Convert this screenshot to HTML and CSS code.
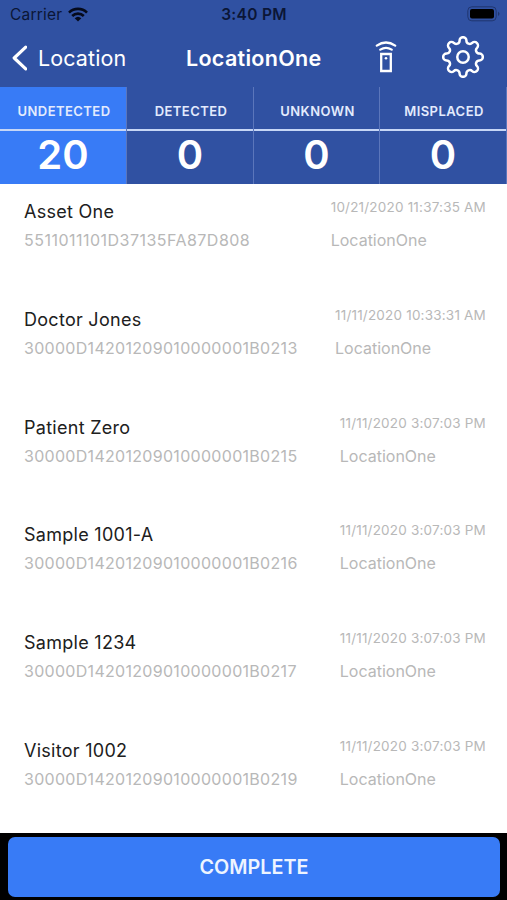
FILE: index.html
```html
<!DOCTYPE html>
<html lang="en">
<head>
<meta charset="utf-8">
<title>LocationOne</title>
<link rel="stylesheet" href="styles.css">
</head>
<body>
<header class="header">
  <div class="status">
    <div class="carrier"><span>Carrier</span>
      <svg class="wifi" width="20" height="15" viewBox="0 0 20 15" fill="none" stroke="#050a1c" stroke-width="2.6"><path d="M1 5.6a12.8 12.8 0 0 1 18 0M4.2 9a8.3 8.3 0 0 1 11.6 0"/><path d="M6.7 11.2a4.8 4.8 0 0 1 6.6 0L10 14.6z" fill="#050a1c" stroke="none"/></svg>
    </div>
    <span class="time">3:40 PM</span>
    <svg class="battery" width="33" height="16" viewBox="0 0 33 16"><rect x=".8" y=".8" width="28.4" height="14" rx="4" fill="none" stroke="#20366f"/><rect x="3" y="3" width="24" height="9.6" rx="2" fill="#000"/><path d="M31 5.5q3 2.3 0 4.6z" fill="#20366f"/></svg>
  </div>
  <nav class="nav">
    <a class="back"><svg width="16" height="26" viewBox="0 0 16 26" fill="none" stroke="#fff" stroke-width="3.2" stroke-linecap="round" stroke-linejoin="round"><path d="M14.7 2.2 3.2 13l11.5 10.8"/></svg><span>Location</span></a>
    <h1 class="title">LocationOne</h1>
    <svg class="reader" width="22" height="32" viewBox="0 0 22 32" fill="none" stroke="#fff" stroke-width="2.3" stroke-linecap="round"><path d="M1.8 4.6Q11-1.6 20.2 4.6M5.3 8.6Q11 5 16.7 8.6"/><path d="M6.2 13h9.6v17H6.2z" stroke-linecap="butt"/><circle cx="11" cy="17.2" r="1.3" fill="#fff" stroke="none"/></svg>
    <svg class="gear" width="42" height="42" viewBox="-22 -22 44 44" fill="none" stroke="#fff" stroke-width="2.6" stroke-linejoin="round"><path d="M-3.6-17.2A3.6 3.6 0 0 1 3.6-17.2A3.5 3.5 0 0 0 9.62-14.71A3.6 3.6 0 0 1 14.71-9.62A3.5 3.5 0 0 0 17.2-3.6A3.6 3.6 0 0 1 17.2 3.6A3.5 3.5 0 0 0 14.71 9.62A3.6 3.6 0 0 1 9.62 14.71A3.5 3.5 0 0 0 3.6 17.2A3.6 3.6 0 0 1-3.6 17.2A3.5 3.5 0 0 0-9.62 14.71A3.6 3.6 0 0 1-14.71 9.62A3.5 3.5 0 0 0-17.2 3.6A3.6 3.6 0 0 1-17.2-3.6A3.5 3.5 0 0 0-14.71-9.62A3.6 3.6 0 0 1-9.62-14.71A3.5 3.5 0 0 0-3.6-17.2Z"/><circle r="6"/></svg>
  </nav>
</header>
<section class="tabs">
  <div class="tab active"><div class="label">UNDETECTED</div><div class="count">20</div></div>
  <div class="tab"><div class="label">DETECTED</div><div class="count">0</div></div>
  <div class="tab"><div class="label">UNKNOWN</div><div class="count">0</div></div>
  <div class="tab"><div class="label">MISPLACED</div><div class="count">0</div></div>
</section>
<main class="list">
  <article class="item"><div><h2 class="name">Asset One</h2><p class="tag">5511011101D37135FA87D808</p></div><div class="side"><p class="date">10/21/2020 11:37:35 AM</p><p class="place">LocationOne</p></div></article>
  <article class="item"><div><h2 class="name">Doctor Jones</h2><p class="tag">30000D14201209010000001B0213</p></div><div class="side"><p class="date">11/11/2020 10:33:31 AM</p><p class="place">LocationOne</p></div></article>
  <article class="item"><div><h2 class="name">Patient Zero</h2><p class="tag">30000D14201209010000001B0215</p></div><div class="side"><p class="date">11/11/2020 3:07:03 PM</p><p class="place">LocationOne</p></div></article>
  <article class="item"><div><h2 class="name">Sample 1001-A</h2><p class="tag">30000D14201209010000001B0216</p></div><div class="side"><p class="date">11/11/2020 3:07:03 PM</p><p class="place">LocationOne</p></div></article>
  <article class="item"><div><h2 class="name">Sample 1234</h2><p class="tag">30000D14201209010000001B0217</p></div><div class="side"><p class="date">11/11/2020 3:07:03 PM</p><p class="place">LocationOne</p></div></article>
  <article class="item"><div><h2 class="name">Visitor 1002</h2><p class="tag">30000D14201209010000001B0219</p></div><div class="side"><p class="date">11/11/2020 3:07:03 PM</p><p class="place">LocationOne</p></div></article>
</main>
<footer class="footer"><button class="complete">COMPLETE</button></footer>
</body>
</html>
```
FILE: styles.css
```css
* { box-sizing: border-box; margin: 0; padding: 0; }
body { width: 507px; height: 900px; overflow: hidden; display: flex; flex-direction: column; background: #fff; font-family: Inter, "Liberation Sans", sans-serif; white-space: nowrap; }
.header { height: 87px; background: #3051a2; }
.status { height: 29px; display: grid; grid-template-columns: 1fr auto 1fr; align-items: center; padding: 0 7px 0 10px; color: #0b1636; }
.carrier { display: flex; align-items: center; gap: 6px; font-size: 15.5px; line-height: 29px; letter-spacing: .2px; }
.time { font-size: 15.5px; font-weight: 600; line-height: 29px; letter-spacing: .3px; margin-right: 2px; }
.battery { justify-self: end; margin-top: -2px; }
.nav { height: 58px; display: grid; grid-template-columns: 175px 199px 69px 44px; align-items: center; padding-left: 11px; color: #fff; }
.back { display: flex; align-items: center; gap: 11px; font-size: 21.5px; line-height: 58px; letter-spacing: .1px; }
.title { font-size: 21.5px; font-weight: 600; line-height: 58px; letter-spacing: .3px; }
.reader { margin: -2px 0 0 -10px; }
.gear { margin: -2px 0 0 -12px; }
.tabs { height: 97px; display: grid; grid-template-columns: 127px 127px 126px 127px; background: #3051a2; color: #fff; text-align: center; }
.tab { border-right: 1px solid #5b76bb; }
.tab.active { background: #387bf6; }
.label { height: 44px; padding-left: 2px; border-bottom: 2px solid #c6d6f6; font-size: 13px; font-weight: 600; line-height: 49px; letter-spacing: .45px; color: #e3ebfd; }
.count { height: 53px; font-size: 40px; font-weight: 600; line-height: 48px; }
.list { height: 649px; }
.item { height: 107.8px; padding: 14px 21px 0 24px; display: flex; justify-content: space-between; }
.name { font-size: 18px; font-weight: 400; line-height: 27px; letter-spacing: .28px; color: #202020; }
.tag, .place { margin-top: 2px; font-size: 16px; line-height: 26px; color: #b8b8b8; }
.tag { letter-spacing: .3px; }
.item:first-child .tag { letter-spacing: .48px; }
.date { font-size: 13.5px; line-height: 19px; color: #b8b8b8; letter-spacing: .2px; }
.place { margin-top: 10px; }
.footer { height: 67px; padding: 4px 7px 3px 8px; background: #000; }
.complete { width: 100%; height: 60px; border: 0; border-radius: 7px; background: #387bf6; color: #edf4ff; font: 600 19.8px Inter, sans-serif; }
```
